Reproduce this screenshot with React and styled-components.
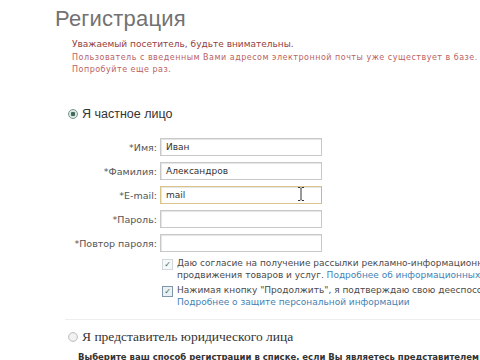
import React from 'react';
import styled, { createGlobalStyle } from 'styled-components';

const Global = createGlobalStyle`
  html, body {
    margin: 0;
    padding: 0;
    background: #fff;
    overflow: hidden;
  }
  body {
    font-family: "DejaVu Sans", Verdana, sans-serif;
  }
`

const Page = styled.div`
  width: 480px;
  height: 360px;
  overflow: hidden;
  padding: 6px 0 0 55px;
  box-sizing: border-box;
`

const Title = styled.h1`
  margin: 0;
  font-family: "Liberation Sans", Arial, sans-serif;
  font-size: 22px;
  font-weight: normal;
  color: #727272;
  letter-spacing: 0.2px;
  line-height: 26px;
`

const Notice = styled.div`
  margin: 6px 0 0 17px;
  white-space: nowrap;
`

const NoticeHead = styled.div`
  font-size: 9px;
  color: #94403d;
  line-height: 13px;
`

const NoticeText = styled.div`
  font-size: 8px;
  color: #bb6262;
  line-height: 12px;
  letter-spacing: 0.5px;
  margin-top: ${p => p.$gap || 0}px;
`

const RadioRow = styled.label`
  display: flex;
  align-items: center;
  gap: 4px;
  margin: ${p => p.$top}px 0 0 13px;
  font-size: ${p => p.$serif ? 13.5 : 12.5}px;
  line-height: 16px;
  color: #333;
  white-space: nowrap;
  font-family: ${p => p.$serif ? '"Liberation Serif", "Times New Roman", serif' : '"Liberation Sans", Arial, sans-serif'};
`

const Radio = styled.span`
  flex: none;
  width: 8px;
  height: 8px;
  border-radius: 50%;
  border: 1px solid ${p => p.$on ? '#7a9a8c' : '#c4c4c4'};
  background: radial-gradient(circle, ${p => p.$on ? '#3f6a5a 0 2px, #d9e6e0 2.5px' : '#f2f2f2 0 3px, #e2e2e2 4px'});
`

const Form = styled.div`
  display: grid;
  grid-template-columns: 102px 162px;
  column-gap: 3px;
  row-gap: 6px;
  margin-top: 16px;
  align-items: center;
`

const Label = styled.div`
  text-align: right;
  font-size: 9.5px;
  color: #555;
  white-space: nowrap;
`

const InputWrap = styled.div`
  position: relative;
`

const Input = styled.div`
  height: 18px;
  box-sizing: border-box;
  border: 1px solid ${p => p.$focus ? '#d9c48a' : '#c8c8c8'};
  border-right-color: ${p => p.$focus ? '#e3b060' : '#c8c8c8'};
  box-shadow: inset 1px 1px 1px #e4e4e4;
  font-size: 9px;
  color: #333;
  padding: 0 5px;
  line-height: 16px;
`

const Cursor = styled.svg`
  position: absolute;
  left: 138px;
  top: 1px;
`

const Checks = styled.div`
  margin: 6px 0 0 107px;
  display: flex;
  flex-direction: column;
  gap: 4px;
`

const CheckRow = styled.div`
  display: flex;
  gap: 4px;
  font-size: 9px;
  color: #4a4a4a;
  line-height: 11.5px;
  white-space: nowrap;
`

const Box = styled.span`
  flex: none;
  width: 9px;
  height: 9px;
  margin-top: 1px;
  border: 1px solid ${p => p.$framed ? '#7f96ab' : '#d0d8de'};
  background: ${p => p.$framed ? '#eaf0f5' : '#f6f8fa'};
  display: flex;
  align-items: center;
  justify-content: center;
  font-size: 8px;
  color: #3b6a34;
  line-height: 1;
`

const Link = styled.span`
  color: #3f82b5;
`

const Divider = styled.hr`
  border: 0;
  border-top: 1px solid #eeeeee;
  margin: 11px 0 0 10px;
`

const Hint = styled.div`
  margin: 7px 0 0 23px;
  font-size: 8.5px;
  font-weight: bold;
  color: #333;
  white-space: nowrap;
`

const fields = [
  { label: '*Имя:', value: 'Иван' },
  { label: '*Фамилия:', value: 'Александров' },
  { label: '*E-mail:', value: 'mail', focus: true },
  { label: '*Пароль:', value: '' },
  { label: '*Повтор пароля:', value: '' },
]

export default function App() {
  return (
    <Page>
      <Global />
      <Title>Регистрация</Title>
      <Notice>
        <NoticeHead>Уважаемый посетитель, будьте внимательны.</NoticeHead>
        <NoticeText $gap={1}>Пользователь с введенным Вами адресом электронной почты уже существует в базе.</NoticeText>
        <NoticeText>Попробуйте еще раз.</NoticeText>
      </Notice>

      <RadioRow $top={30}><Radio $on />Я частное лицо</RadioRow>

      <Form>
        {fields.map(f => (
          <React.Fragment key={f.label}>
            <Label>{f.label}</Label>
            <InputWrap>
              <Input $focus={f.focus}>{f.value}</Input>
              {f.focus && (
                <Cursor width="6" height="14" viewBox="0 0 6 14">
                  <path d="M0 0.5h2l1 1 1-1h2M3 1.5v11M0 13.5h2l1-1 1 1h2" stroke="#333" strokeWidth="1" fill="none" />
                </Cursor>
              )}
            </InputWrap>
          </React.Fragment>
        ))}
      </Form>

      <Checks>
        <CheckRow>
          <Box>✓</Box>
          <div>
            Даю согласие на получение рассылки рекламно-информационных материалов<br />
            продвижения товаров и услуг. <Link>Подробнее об информационных рассылках</Link>
          </div>
        </CheckRow>
        <CheckRow>
          <Box $framed>✓</Box>
          <div>
            Нажимая кнопку "Продолжить", я подтверждаю свою дееспособность<br />
            <Link>Подробнее о защите персональной информации</Link>
          </div>
        </CheckRow>
      </Checks>

      <Divider />

      <RadioRow $top={9} $serif><Radio />Я представитель юридического лица</RadioRow>
      <Hint>Выберите ваш способ регистрации в списке, если Вы являетесь представителем юридического лица</Hint>
    </Page>
  );
}
